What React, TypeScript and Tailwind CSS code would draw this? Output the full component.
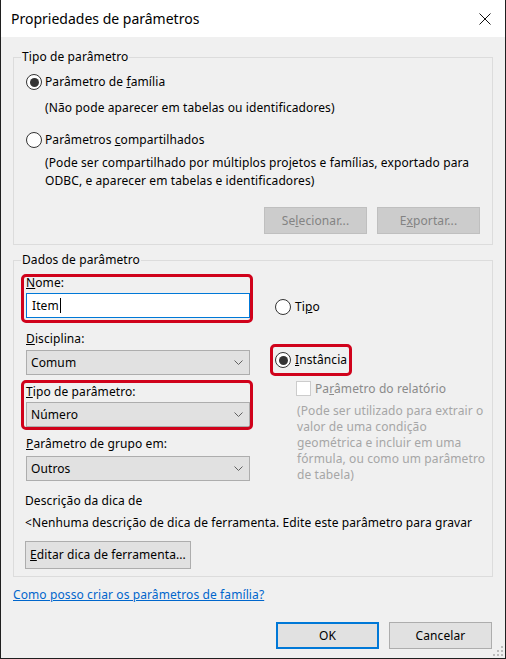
import React from 'react';

function Radio({ checked }: { checked?: boolean }) {
  return (
    <span className="flex h-4 w-4 shrink-0 items-center justify-center rounded-full border border-[#333333] bg-white">
      {checked && <span className="h-[9px] w-[9px] rounded-full bg-[#333333]" />}
    </span>
  );
}

function Chevron() {
  return (
    <svg width="9" height="5" viewBox="0 0 9 5" className="shrink-0">
      <path d="M0.5 0.5 L4.5 4.5 L8.5 0.5" stroke="#606060" strokeWidth="1" fill="none" />
    </svg>
  );
}

function Select({ value }: { value: string }) {
  return (
    <div className="flex h-[25px] items-center justify-between border border-[#adadad] bg-[#e1e1e1] pl-[4px] pr-[6px]">
      <span>{value}</span>
      <Chevron />
    </div>
  );
}

// red highlight drawn over a block
function Mark({ className }: { className: string }) {
  return <span className={'pointer-events-none absolute rounded-[5px] border-[3px] border-[#d0021b] ' + className} />;
}

export default function App() {
  return (
    <div className="relative flex h-[659px] w-[506px] flex-col border-x border-b border-[#1f1f1f] font-['Noto_Sans',sans-serif] text-[12px] leading-[16px] tracking-[0.1px] text-black">
      {/* title bar */}
      <div className="flex h-[37px] shrink-0 items-center justify-between bg-white pl-[10px] pr-[14px]">
        <span className="text-[14px] leading-[20px] tracking-normal">Propriedades de parâmetros</span>
        <svg width="12" height="12" viewBox="0 0 12 12">
          <path d="M0.5 0.5 L11.5 11.5 M11.5 0.5 L0.5 11.5" stroke="#111" strokeWidth="1" />
        </svg>
      </div>

      <div className="relative flex flex-1 flex-col bg-[#f0f0f0] px-[12px] pt-[12px]">
        {/* Tipo de parâmetro */}
        <fieldset className="border border-[#dcdcdc]">
          <legend className="ml-[7px] px-[1px]">Tipo de parâmetro</legend>
          <div className="flex flex-col px-[12px] pb-[10px]">
            <div className="mt-[9px] flex h-4 items-center gap-[3px]">
              <Radio checked />
              <span>
                Parâmetro de <u>f</u>amília
              </span>
            </div>
            <div className="mt-[10px] pl-[19px]">(Não pode aparecer em tabelas ou identificadores)</div>
            <div className="mt-[16px] flex h-4 items-center gap-[3px]">
              <Radio />
              <span>
                Parâmetros <u>c</u>ompartilhados
              </span>
            </div>
            <div className="mt-[6px] pl-[19px] leading-[18px]">
              (Pode ser compartilhado por múltiplos projetos e famílias, exportado para ODBC, e aparecer em tabelas e
              identificadores)
            </div>
            <div className="mt-[17px] flex justify-end gap-[10px]">
              <div className="flex h-[27px] w-[103px] items-center justify-center border border-[#bfbfbf] bg-[#cccccc] text-[#838383]">
                <span>
                  Se<u>l</u>ecionar...
                </span>
              </div>
              <div className="flex h-[27px] w-[103px] items-center justify-center border border-[#bfbfbf] bg-[#cccccc] text-[#838383]">
                <span>
                  E<u>x</u>portar...
                </span>
              </div>
            </div>
          </div>
        </fieldset>

        {/* Dados de parâmetro */}
        <fieldset className="mt-[7px] border border-[#dcdcdc]">
          <legend className="ml-[7px] px-[1px]">Dados de parâmetro</legend>
          <div className="flex flex-col pl-[12px] pr-[4px] pb-[7px]">
            <div className="flex">
              <div className="flex w-[224px] shrink-0 flex-col">
                <div className="relative mt-[7px] flex flex-col">
                  <Mark className="-left-[5px] -right-[3px] -top-[1px] -bottom-[5px]" />
                  <span>
                    <u>N</u>ome:
                  </span>
                  <div className="mt-[2px] flex h-[25px] items-center border border-[#0078d7] bg-white pl-[5px]">
                    <span>Item</span>
                    <span className="ml-[1px] h-[15px] w-[1px] bg-black" />
                  </div>
                </div>

                <span className="mt-[13px]">
                  <u>D</u>isciplina:
                </span>
                <div className="mt-[3px]">
                  <Select value="Comum" />
                </div>

                <div className="relative mt-[9px] flex flex-col">
                  <Mark className="-left-[5px] -right-[3px] -top-[4px] -bottom-[3px]" />
                  <span>
                    <u>T</u>ipo de parâmetro:
                  </span>
                  <div className="mt-[2px]">
                    <Select value="Número" />
                  </div>
                </div>

                <span className="mt-[9px]">
                  <u>P</u>arâmetro de grupo em:
                </span>
                <div className="mt-[4px]">
                  <Select value="Outros" />
                </div>
              </div>

              <div className="ml-[25px] flex w-[212px] shrink-0 flex-col">
                <div className="mt-[31px] flex h-4 items-center gap-[4px]">
                  <Radio />
                  <span>
                    Ti<u>p</u>o
                  </span>
                </div>
                <div className="relative mt-[37px] flex h-4 items-center gap-[4px] self-start">
                  <Mark className="-left-[5px] -right-[5px] -top-[8px] -bottom-[8px]" />
                  <Radio checked />
                  <span>
                    <u>I</u>nstância
                  </span>
                </div>
                <div className="mt-[13px] flex h-[15px] items-center gap-[4px] pl-[21px] text-[#8a8a8a]">
                  <span className="h-[15px] w-[15px] shrink-0 border border-[#cccccc] bg-white" />
                  <span>
                    Pa<u>r</u>âmetro do relatório
                  </span>
                </div>
                <div className="mt-[7px] pl-[22px] text-[#a6a6a6]">
                  (Pode ser utilizado para extrair o valor de uma condição geométrica e incluir em uma fórmula, ou como
                  um parâmetro de tabela)
                </div>
              </div>
            </div>

            <div className="-ml-[1px] mt-[10px]">Descrição da dica de</div>
            <div className="-ml-[1px] mt-[6px] overflow-hidden whitespace-nowrap">
              &lt;Nenhuma descrição de dica de ferramenta. Edite este parâmetro para gravar
            </div>
            <div className="-ml-[1px] mt-[10px] flex h-[28px] w-[166px] items-center justify-center border border-[#adadad] bg-[#e1e1e1]">
              <span>
                <u>E</u>ditar dica de ferramenta...
              </span>
            </div>
          </div>
        </fieldset>

        <a className="mt-[10px] self-start text-[#0066cc] underline">Como posso criar os parâmetros de família?</a>

        <div className="mt-[19px] flex justify-end gap-[10px] pr-[1px]">
          <div className="flex h-[27px] w-[103px] items-center justify-center border-2 border-[#0078d7] bg-[#e1e1e1]">
            OK
          </div>
          <div className="flex h-[27px] w-[103px] items-center justify-center border border-[#adadad] bg-[#e1e1e1]">
            Cancelar
          </div>
        </div>

        {/* size grip */}
        <svg width="12" height="12" viewBox="0 0 12 12" className="absolute bottom-[1px] right-[1px]">
          <rect x="9" y="1" width="2" height="2" fill="#bcbcbc" />
          <rect x="5" y="5" width="2" height="2" fill="#bcbcbc" />
          <rect x="9" y="5" width="2" height="2" fill="#bcbcbc" />
          <rect x="1" y="9" width="2" height="2" fill="#bcbcbc" />
          <rect x="5" y="9" width="2" height="2" fill="#bcbcbc" />
          <rect x="9" y="9" width="2" height="2" fill="#bcbcbc" />
        </svg>
      </div>
    </div>
  );
}
